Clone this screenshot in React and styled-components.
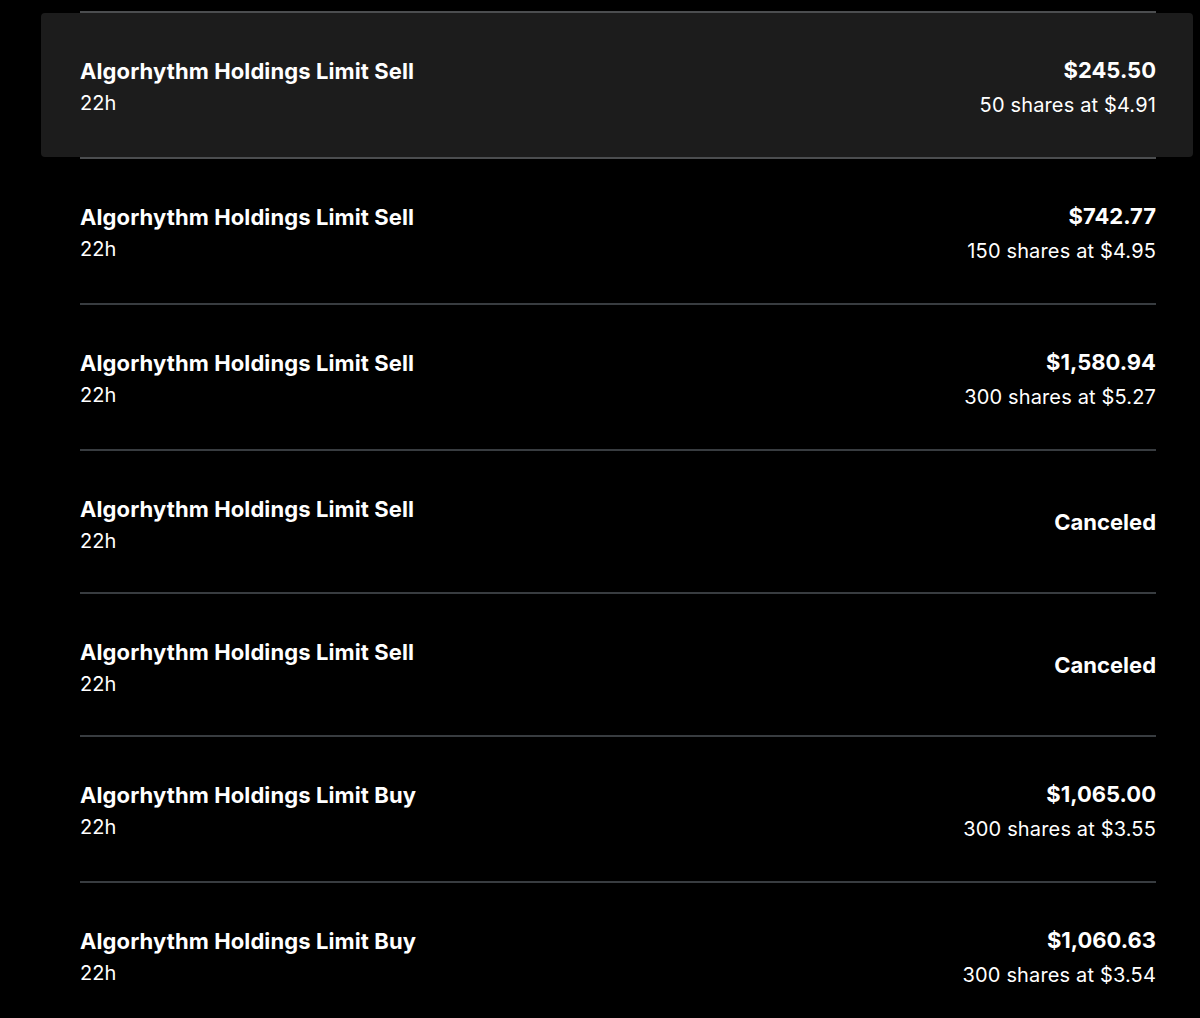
import React from 'react';
import styled, { createGlobalStyle } from 'styled-components';

const divider = '#383c40';
const dividerLit = '#4b4d4f';
const hoverBg = '#1c1c1c';

const GlobalStyle = createGlobalStyle`
  html, body {
    margin: 0;
    background: #000;
    color: #fff;
    font-family: Inter, 'Noto Sans', 'Liberation Sans', sans-serif;
  }
`;

const Page = styled.div`
  min-height: 1018px;
  padding: 11px 0 0 80px;
  box-sizing: border-box;
  overflow: hidden;
`;

const List = styled.ul`
  list-style: none;
  margin: 0;
  padding: 0;
  width: 1076px;
`;

const Row = styled.li`
  position: relative;
  display: flex;
  justify-content: space-between;
  align-items: flex-start;
  padding: 43px 0 39px;
  border-top: 2px solid ${(p) => (p.$lit ? dividerLit : divider)};
  cursor: pointer;
  isolation: isolate;

  &::before {
    content: '';
    position: absolute;
    top: 0;
    bottom: 0;
    left: -39px;
    right: -37px;
    border-radius: 4px;
    background: ${(p) => (p.$active ? hoverBg : 'transparent')};
    z-index: -1;
  }
`;

const Left = styled.div`
  display: flex;
  flex-direction: column;
  padding-top: 2px;
`;

const Title = styled.span`
  font-size: 22px;
  font-weight: 700;
  line-height: 26px;
  letter-spacing: 0.1px;
`;

const Time = styled.span`
  font-size: 20px;
  line-height: 24px;
  margin-top: 7px;
`;

const Right = styled.div`
  display: flex;
  flex-direction: column;
  align-items: flex-end;
  padding-top: 1px;
`;

const Amount = styled.span`
  font-size: 22px;
  font-weight: 700;
  line-height: 26px;
`;

const Detail = styled.span`
  font-size: 20px;
  line-height: 25px;
  margin-top: 10px;
  letter-spacing: 0.15px;
`;

const Status = styled.span`
  font-size: 22px;
  font-weight: 700;
  line-height: 26px;
  margin-top: 14px;
`;

const orders = [
  { side: 'Sell', amount: '$245.50', detail: '50 shares at $4.91' },
  { side: 'Sell', amount: '$742.77', detail: '150 shares at $4.95' },
  { side: 'Sell', amount: '$1,580.94', detail: '300 shares at $5.27' },
  { side: 'Sell', canceled: true },
  { side: 'Sell', canceled: true },
  { side: 'Buy', amount: '$1,065.00', detail: '300 shares at $3.55' },
  { side: 'Buy', amount: '$1,060.63', detail: '300 shares at $3.54' },
];

const App = () => {
  const [hovered, setHovered] = React.useState(0);
  return (
    <Page>
      <GlobalStyle />
      <List>
        {orders.map((o, i) => (
          <Row
            key={i}
            $active={hovered === i}
            $lit={hovered === i || hovered === i - 1}
            onMouseEnter={() => setHovered(i)}
          >
            <Left>
              <Title>Algorhythm Holdings Limit {o.side}</Title>
              <Time>22h</Time>
            </Left>
            <Right>
              {o.canceled ? (
                <Status>Canceled</Status>
              ) : (
                <>
                  <Amount>{o.amount}</Amount>
                  <Detail>{o.detail}</Detail>
                </>
              )}
            </Right>
          </Row>
        ))}
      </List>
    </Page>
  );
};

export default App;
